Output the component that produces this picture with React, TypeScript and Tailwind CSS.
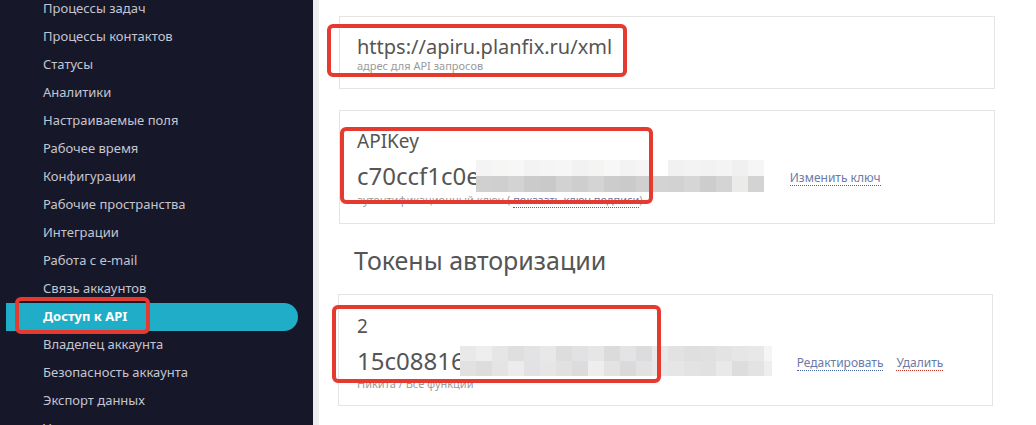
import React from "react";

const menu = [
  "Процессы задач",
  "Процессы контактов",
  "Статусы",
  "Аналитики",
  "Настраиваемые поля",
  "Рабочее время",
  "Конфигурации",
  "Рабочие пространства",
  "Интеграции",
  "Работа с e-mail",
  "Связь аккаунтов",
  "Доступ к API",
  "Владелец аккаунта",
  "Безопасность аккаунта",
  "Экспорт данных",
  "Удаление аккаунта",
];

const mos1Top = ["#f4f4f4","#f6f6f5","#f7f7f7","#f3f3f3","#f5f5f5","#f6f6f6","#f2f2f2","#f4f4f3","#f7f7f7","#f3f3f3","#f5f5f5","#ffffff","#f1f1f1","#f3f3f3","#f2f2f2","#f4f4f4","#f0f0f0","#f6f6f6"];
const mos1Bot = ["#d0d0d0","#cfcfcf","#d3d3d3","#cbcbcb","#c9c9c9","#d2d2d2","#cecece","#d4d4d4","#cccccc","#cacaca","#d0d0d0","#d3d3d3","#d2d2d2","#d6d6d6","#cdcdcd","#d4d4d4","#ebebea","#d3d3d3"];
const mos3Top = ["#e9e9e9","#eeeeee","#e6e6e6","#dfdfdf","#e3e3e5","#e8e8e8","#dddddd","#e2e2e4","#e6e6e6","#dbdbdb","#e4e4e6","#dcdcde","#e9e9e9","#e2e2e2","#dfdfdf","#e0e0e0","#e3e3e3","#e6e6e6","#e8e8e8","#f5f5f7"];
const mos3Bot = ["#e1e1e1","#dddddd","#e4e4e4","#ececec","#e2e2e4","#e6e6e6","#e1e1e1","#dcdcdc","#eeeeee","#e3e3e3","#dadada","#e2e2e2","#e8e8e8","#e6e6e6","#e3e3e3","#e1e1e1","#e9e9e9","#dddddd","#e3e3e3","#eeeeee"];

function Mosaic({ top, bot, h, last = 16 }: { top: string[]; bot: string[]; h: number; last?: number }) {
  return (
    <div className="flex flex-col">
      {[top, bot].map((row, r) => (
        <div key={r} className="flex">
          {row.map((c, i) => (
            <div key={i} style={{ background: c, width: i === row.length - 1 ? last : 16, height: h }} />
          ))}
        </div>
      ))}
    </div>
  );
}

function RedBox({ className }: { className: string }) {
  return (
    <div
      className={
        "absolute border-[4px] border-[#e53a2f] rounded-[6px] pointer-events-none " +
        className
      }
    />
  );
}

export default function App() {
  return (
    <div
      className="relative w-[1036px] h-[425px] overflow-hidden flex bg-white"
      style={{ fontFamily: '"Noto Sans", "Open Sans", sans-serif' }}
    >
      {/* Sidebar */}
      <div className="w-[313px] shrink-0 bg-[#17172a] flex flex-col -mt-[5px]">
        {menu.map((m) =>
          m === "Доступ к API" ? (
            <div
              key={m}
              className="h-[28px] shrink-0 ml-[6px] w-[292px] bg-[#1fadc7] rounded-r-full flex items-center pl-[37px] text-white font-bold text-[13px]"
            >
              {m}
            </div>
          ) : (
            <div
              key={m}
              className="h-[28px] shrink-0 flex items-center pl-[43px] text-[#c4c5cf] text-[13px]"
            >
              {m}
            </div>
          )
        )}
      </div>
      <div className="w-[6px] shrink-0 bg-[#eeeeee]" />

      {/* Main */}
      <div className="flex-1 pl-[20px] pt-[16px] text-[#555555]">
        <div className="w-[656px] border border-[#e4e4e4] pt-[18px] pb-[16px] pl-[17px]">
          <div className="text-[20px] leading-[24px]">https://apiru.planfix.ru/xml</div>
          <div className="text-[11px] leading-[13px] text-[#9a9a9a]">адрес для API запросов</div>
        </div>

        <div className="w-[656px] mt-[21px] border border-[#e4e4e4] pt-[18px] pb-[17px] pl-[17px]">
          <div className="text-[19px] leading-[24px]">APIKey</div>
          <div className="flex items-center mt-[8px] h-[30px]">
            <span className="text-[24px] leading-[30px]">c70ccf1c0e</span>
            <div className="-ml-[4px]">
              <Mosaic top={mos1Top} bot={mos1Bot} h={16} />
            </div>
            <span className="ml-[26px] text-[12px] text-[#6b7aa8] border-b border-dotted border-[#4a64a8] leading-[14px] mt-[4px]">
              Изменить ключ
            </span>
          </div>
          <div className="text-[11px] leading-[13px] text-[#9a9a9a] mt-[2px]">
            аутентификационный ключ ({" "}
            <span className="text-[#6b7aa8] border-b border-dotted border-[#4a64a8]">показать ключ подписи</span>)
          </div>
        </div>

        <div className="mt-[21px] ml-[15px] text-[25px] leading-[30px] text-[#555555]">
          Токены авторизации
        </div>

        <div className="w-[655px] -ml-[1px] mt-[19px] border border-[#e4e4e4] pt-[19px] pb-[15px] pl-[18px]">
          <div className="text-[19px] leading-[24px]">2</div>
          <div className="flex items-center mt-[8px] h-[30px]">
            <span className="text-[24px] leading-[30px]">15c08816</span>
            <div className="-ml-[5px]">
              <Mosaic top={mos3Top} bot={mos3Bot} h={15} last={8} />
            </div>
            <span className="ml-[25px] text-[12px] text-[#6b7aa8] border-b border-dotted border-[#4a64a8] leading-[14px] mt-[4px]">
              Редактировать
            </span>
            <span className="ml-[13px] text-[12px] text-[#6b7aa8] border-b border-dotted border-[#c0302a] leading-[14px] mt-[4px]">
              Удалить
            </span>
          </div>
          <div className="text-[11px] leading-[13px] text-[#9a9a9a] mt-[1px]">Никита / Все функции</div>
        </div>
      </div>

      {/* Annotation boxes */}
      <RedBox className="left-[15px] top-[297px] w-[135px] h-[37px]" />
      <RedBox className="left-[327px] top-[24px] w-[300px] h-[53px]" />
      <RedBox className="left-[340px] top-[127px] w-[313px] h-[77px]" />
      <RedBox className="left-[332px] top-[305px] w-[329px] h-[78px]" />
    </div>
  );
}
